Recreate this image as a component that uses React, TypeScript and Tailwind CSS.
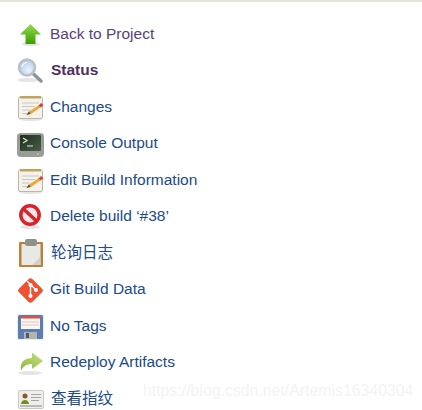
import React from 'react';

const Shadow = ({ x = 14, y = 24, rx = 10 }: { x?: number; y?: number; rx?: number }) => (
  <ellipse cx={x} cy={y} rx={rx} ry="2" fill="#000" opacity="0.1" />
);

const UpIcon = () => (
  <svg width="28" height="28" viewBox="0 0 28 28" className="overflow-visible">
    <defs>
      <linearGradient id="up" x1="0" y1="0" x2="0" y2="1">
        <stop offset="0" stopColor="#9bd85a" />
        <stop offset="0.6" stopColor="#5fb81a" />
        <stop offset="1" stopColor="#3f9a06" />
      </linearGradient>
    </defs>
    <Shadow x={15.5} y={25} rx={9} />
    <path d="M15.500 5 L26 15.500 H20.500 V25 H10.500 V15.500 H5 Z" fill="url(#up)" />
  </svg>
);

const SearchIcon = () => (
  <svg width="28" height="28" viewBox="0 0 28 28" className="overflow-visible">
    <defs>
      <radialGradient id="lens" cx="0.6" cy="0.65" r="0.7">
        <stop offset="0" stopColor="#eaf3fb" />
        <stop offset="1" stopColor="#a9c8ea" />
      </radialGradient>
    </defs>
    <Shadow x={13} y={24} rx={11} />
    <path d="M18.500 18 L26 25" stroke="#8d969c" strokeWidth="3.500" strokeLinecap="round" />
    <circle cx="12" cy="11.500" r="8" fill="url(#lens)" stroke="#b9c0c6" strokeWidth="2.500" />
    <path d="M7 11 A5.500 5.500 0 0 1 12 6.500" stroke="#fff" strokeWidth="1.200" fill="none" />
  </svg>
);

const NotepadIcon = () => (
  <svg width="28" height="28" viewBox="0 0 28 28" className="overflow-visible">
    <Shadow x={15.500} y={27} rx={12} />
    <rect x="3.500" y="5" width="24" height="21.500" rx="1.500" fill="#f4f2ea" stroke="#b9b7ab" />
    <rect x="5" y="4" width="21" height="2.500" fill="#c0a560" />
    <path d="M7 11 H24 M7 14.500 H20 M7 18 H15 M7 21.500 H12" stroke="#c8c8c4" strokeWidth="1" />
    <path d="M11.500 23 L14 19.500 L24 13 L26 15 L16 22 Z" fill="#e8a93a" />
    <path d="M23.500 13.500 L26 15.500 L28.500 13 L26 11 Z" fill="#d2453a" />
    <path d="M11.500 23 L14 19.500 L15.500 21.800 Z" fill="#5b4630" />
  </svg>
);

const TerminalIcon = () => (
  <svg width="28" height="28" viewBox="0 0 28 28" className="overflow-visible">
    <defs>
      <linearGradient id="screen" x1="0" y1="0" x2="1" y2="1">
        <stop offset="0" stopColor="#1f2b1c" />
        <stop offset="1" stopColor="#48604a" />
      </linearGradient>
    </defs>
    <rect x="2" y="4" width="27" height="24" rx="4" fill="#9a9d96" />
    <rect x="5" y="6" width="21" height="16" rx="1" fill="url(#screen)" />
    <path d="M8 9 L12 11.500 L8 14" stroke="#dbe8d4" strokeWidth="1.200" fill="none" />
    <path d="M12 17 H18" stroke="#c2d4bc" strokeWidth="1.200" />
    <rect x="22" y="24.500" width="2" height="1" fill="#d8dcd4" />
  </svg>
);

const NoIcon = () => (
  <svg width="28" height="28" viewBox="0 0 28 28" className="overflow-visible">
    <Shadow x={15} y={25} rx={10} />
    <circle cx="15" cy="13" r="9.200" fill="#f6e8e8" stroke="#d8232a" strokeWidth="3.500" />
    <path d="M8.500 7 L21.500 19" stroke="#d8232a" strokeWidth="3.500" />
  </svg>
);

const ClipboardIcon = () => (
  <svg width="28" height="28" viewBox="0 0 28 28" className="overflow-visible">
    <rect x="4" y="4" width="24" height="25" rx="1" fill="#bb8238" />
    <rect x="6.500" y="6" width="19" height="21" fill="#e8e8e4" />
    <path d="M17 27 H25.500 V19 Z" fill="#d0d0cc" />
    <rect x="10" y="1" width="12" height="7" rx="2" fill="#8f928c" />
  </svg>
);

const GitIcon = () => (
  <svg width="28" height="28" viewBox="0 0 28 28" className="overflow-visible">
    <rect x="6" y="6" width="19" height="19" rx="3" transform="rotate(45 15.500 15.500)" fill="#f05133" />
    <path d="M12 6 L21 15 M15.500 10 V21" stroke="#fff" strokeWidth="1.400" fill="none" />
    <circle cx="15.500" cy="10" r="2" fill="#fff" />
    <circle cx="21" cy="15" r="2" fill="#fff" />
    <circle cx="15.500" cy="21" r="2" fill="#fff" />
  </svg>
);

const SaveIcon = () => (
  <svg width="28" height="28" viewBox="0 0 28 28" className="overflow-visible">
    <rect x="2" y="3" width="27" height="26" fill="#ececec" />
    <rect x="3" y="4" width="25" height="24" rx="1.500" fill="#5b7db4" />
    <rect x="6" y="5" width="19" height="13" fill="#f9f6f4" />
    <rect x="6" y="5" width="19" height="2.500" fill="#d8544a" />
    <path d="M7 11 H24 M7 14 H24" stroke="#e6c4bc" strokeWidth="1" />
    <rect x="9" y="21" width="13" height="7" fill="#b4b4aa" />
    <rect x="11" y="22" width="3" height="5" fill="#4c5a70" />
  </svg>
);

const RedeployIcon = () => (
  <svg width="28" height="28" viewBox="0 0 28 28" className="overflow-visible">
    <defs>
      <linearGradient id="redeploy" x1="0" y1="1" x2="1" y2="0">
        <stop offset="0" stopColor="#8fb83c" />
        <stop offset="1" stopColor="#c8de84" />
      </linearGradient>
    </defs>
    <Shadow x={15} y={25} rx={12} />
    <path d="M6 22.500 C4.500 14 10 10 17 10 V4.500 L28 13 L17 21 V16 C12 16 8.500 18 6 22.500 Z" fill="url(#redeploy)" />
  </svg>
);

const CardIcon = () => (
  <svg width="28" height="28" viewBox="0 0 28 28" className="overflow-visible">
    <rect x="3.500" y="6.500" width="25" height="18" rx="1.500" fill="#eeeeea" stroke="#c8c8c4" />
    <circle cx="10" cy="12" r="2.500" fill="#8a5a26" />
    <path d="M6 20 C6.500 14.500 13.500 14.500 14 20 Z" fill="#7a8a20" />
    <path d="M16 10.500 H26 M16 13.500 H26 M16 16.500 H24" stroke="#a4a4a4" strokeWidth="1" />
    <path d="M5 22 H27" stroke="#a8a8a4" strokeWidth="1.500" />
  </svg>
);

const items = [
  { label: 'Back to Project', icon: <UpIcon />, color: 'text-[#5a3f78]' },
  { label: 'Status', icon: <SearchIcon />, color: 'ml-px text-[#4f2f5f] font-bold' },
  { label: 'Changes', icon: <NotepadIcon />, color: 'text-[#204a87]' },
  { label: 'Console Output', icon: <TerminalIcon />, color: 'text-[#204a87]' },
  { label: 'Edit Build Information', icon: <NotepadIcon />, color: 'text-[#204a87]' },
  { label: 'Delete build ‘#38’', icon: <NoIcon />, color: 'text-[#204a87]' },
  { label: '轮询日志', icon: <ClipboardIcon />, color: 'ml-px text-[#204a87]' },
  { label: 'Git Build Data', icon: <GitIcon />, color: 'text-[#204a87]' },
  { label: 'No Tags', icon: <SaveIcon />, color: 'text-[#204a87]' },
  { label: 'Redeploy Artifacts', icon: <RedeployIcon />, color: 'text-[#204a87]' },
  { label: '查看指纹', icon: <CardIcon />, color: 'ml-px text-[#204a87]' },
];

export default function App() {
  return (
    <div className="relative w-[422px] h-[410px] overflow-hidden bg-white font-['Liberation_Sans','Noto_Sans_CJK_SC',sans-serif] border-t-2 border-[#e4e4d8]">
      <div className="flex flex-col pt-[13px] pl-[15px]">
        {items.map((item) => (
          <div key={item.label} className="flex items-center gap-[7px] h-[36.5px]">
            <span className="flex w-[28px] h-[28px] shrink-0 blur-[0.4px]">{item.icon}</span>
            <span className={`text-[15.5px] leading-none ${item.color}`}>{item.label}</span>
          </div>
        ))}
      </div>
      {/* csdn watermark */}
      <span className="absolute left-[143px] top-[381px] text-[15.85px] leading-none text-[#f3f3f3]">
        https://blog.csdn.net/Artemis16340304
      </span>
    </div>
  );
}
